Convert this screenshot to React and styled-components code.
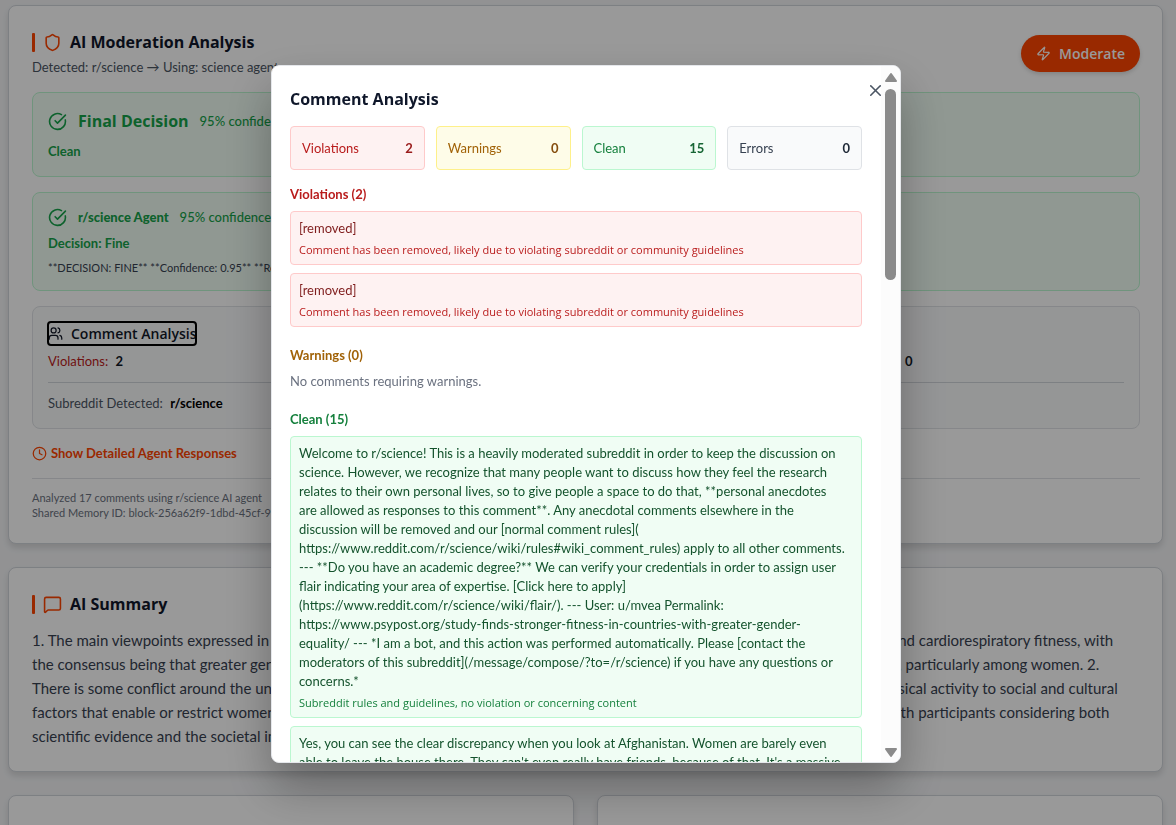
import { useState } from 'react';
import styled, { createGlobalStyle, ThemeProvider } from 'styled-components';
import {
  CircleCheckBig,
  Clock,
  MessageSquare,
  Shield,
  Users,
  X,
  Zap,
} from 'lucide-react';

const theme = {
  headingFont: '"Open Sans", "Noto Sans", sans-serif',
  bodyFont: 'Lato, "Open Sans", sans-serif',
  accent: '#ff4500',
  heading: '#0f172a',
  text: '#374151',
  muted: '#4b5563',
  subtle: '#6b7280',
  border: '#d1d5db',
  borderLight: '#dfe2e6',
  tones: {
    red: { bg: '#fef2f2', border: '#fecaca', label: '#b91c1c', value: '#991b1b', body: '#7f1d1d', note: '#b91c1c' },
    yellow: { bg: '#fefce8', border: '#fef08a', label: '#a16207', value: '#854d0e', body: '#713f12', note: '#a16207' },
    green: { bg: '#f0fdf4', border: '#bbf7d0', label: '#15803d', value: '#166534', body: '#14532d', note: '#15803d' },
    gray: { bg: '#f9fafb', border: '#dfe2e6', label: '#374151', value: '#1f2937', body: '#111827', note: '#374151' },
  },
};

const GlobalStyle = createGlobalStyle`
  * {
    box-sizing: border-box;
    margin: 0;
    padding: 0;
  }

  body {
    height: 100vh;
    overflow: hidden;
    background: #f3f4f6;
    color: #111827;
    font-family: ${theme.bodyFont};
    font-size: 13px;
    line-height: 19px;
  }

  button {
    border: none;
    background: none;
    font: inherit;
    color: inherit;
    cursor: pointer;
  }
`;

const Page = styled.main`
  display: flex;
  flex-direction: column;
  gap: 23px;
  height: 100vh;
  padding: 5px 13px 0 8px;
  overflow: hidden;

  > * {
    flex-shrink: 0;
  }
`;

const Card = styled.section`
  padding: 23px 22px 23px 23px;
  background: #fff;
  border: 1px solid ${props => props.theme.border};
  border-radius: 8px;
  box-shadow: 0 4px 6px rgba(0, 0, 0, 0.12);
`;

const CardRow = styled.div`
  display: grid;
  grid-template-columns: 1fr 1fr;
  gap: 23px;
`;

const EmptyCard = styled(Card)`
  min-height: 200px;
`;

const CardHeader = styled.header`
  display: flex;
  justify-content: space-between;
  align-items: center;
  margin-bottom: ${props => (props.$compact ? '11px' : '15px')};
`;

const CardTitle = styled.h2`
  display: flex;
  align-items: center;
  gap: 8px;
  color: ${props => props.theme.heading};
  font-family: ${props => props.theme.headingFont};
  font-size: 16px;
  font-weight: 700;
  line-height: 26px;

  &::before {
    content: '';
    width: 3px;
    height: 19px;
    border-radius: 1px;
    background: ${props => props.theme.accent};
  }

  svg {
    color: ${props => props.theme.accent};
  }
`;

const Subtitle = styled.p`
  margin-top: 3px;
  color: ${props => props.theme.muted};
`;

const ModerateButton = styled.button`
  display: flex;
  align-items: center;
  gap: 8px;
  height: 37px;
  padding: 0 15px;
  border-radius: 19px;
  background: ${props => props.theme.accent};
  color: #fff;
  font-family: ${props => props.theme.headingFont};
  font-size: 14px;
  font-weight: 600;
  box-shadow: 0 2px 4px rgba(0, 0, 0, 0.15);
`;

const Panel = styled.div`
  margin-bottom: 15px;
  padding: 15px;
  border: 1px solid ${props => props.theme.tones[props.$tone].border};
  border-radius: 8px;
  background: ${props => props.theme.tones[props.$tone].bg};
`;

const AgentRow = styled.div`
  display: flex;
  align-items: center;
  gap: 11px;
  color: #16a34a;
  line-height: ${props => (props.$large ? '26px' : '19px')};

  strong {
    font-family: ${props => (props.$large ? props.theme.headingFont : 'inherit')};
    font-size: ${props => (props.$large ? '16px' : '13px')};
    font-weight: ${props => (props.$large ? '700' : '900')};
  }

  span {
    font-weight: 500;
  }
`;

const Decision = styled.p`
  margin-top: ${props => (props.$spaced ? '8px' : '7px')};
  color: #16a34a;
  font-weight: 700;
`;

const Reasoning = styled.p`
  margin-top: 7px;
  color: ${props => props.theme.text};
  font-size: 11px;
  line-height: 15px;
`;

const AnalysisButton = styled.button`
  display: flex;
  align-items: center;
  gap: 8px;
  margin-bottom: 7px;
  border-radius: 3px;
  outline: 2px solid #000;
  outline-offset: -1px;
  font-family: ${props => props.theme.headingFont};
  font-size: 14px;
  font-weight: 600;
  line-height: 23px;
`;

const Counts = styled.div`
  display: grid;
  grid-template-columns: repeat(4, 1fr);
  gap: 7px;
`;

const Count = styled.p`
  color: ${props => props.theme.tones[props.$tone].label};

  strong {
    margin-left: 4px;
    color: #111827;
    font-weight: 700;
  }
`;

const Detected = styled.p`
  margin-top: 11px;
  padding-top: 11px;
  border-top: 1px solid ${props => props.theme.border};
  color: ${props => props.theme.muted};

  strong {
    margin-left: 4px;
    color: #000;
    font-weight: 700;
  }
`;

const DetailsButton = styled.button`
  display: flex;
  align-items: center;
  gap: 4px;
  color: ${props => props.theme.accent};
  font-weight: 700;
`;

const CardFooter = styled.footer`
  margin-top: 15px;
  padding-top: 11px;
  border-top: 1px solid ${props => props.theme.borderLight};
  color: ${props => props.theme.subtle};
  font-size: 11px;
  line-height: 15px;
`;

const Summary = styled.p`
  color: ${props => props.theme.text};
  font-size: 15px;
  line-height: 24px;
  white-space: pre-line;
`;

const Overlay = styled.div`
  position: fixed;
  inset: 0;
  display: flex;
  justify-content: center;
  padding: 65px 4px 62px 0;
  background: rgba(0, 0, 0, 0.4);
`;

const Dialog = styled.div`
  position: relative;
  display: flex;
  width: 100%;
  max-width: 630px;
  border: 1px solid #e5e7eb;
  border-radius: 8px;
  background: #fff;
  box-shadow: 0 24px 48px rgba(0, 0, 0, 0.3);
  overflow: hidden;
`;

const DialogBody = styled.div`
  flex: 1;
  min-width: 0;
  padding: 19px 19px 19px 18px;
  overflow: hidden;
`;

const DialogTitle = styled.h3`
  margin-bottom: 13px;
  color: ${props => props.theme.heading};
  font-family: ${props => props.theme.headingFont};
  font-size: 16px;
  font-weight: 700;
  line-height: 28px;
`;

const CloseButton = styled.button`
  position: absolute;
  top: 15px;
  right: 15px;
  display: flex;
  color: ${props => props.theme.muted};
`;

const Stats = styled.div`
  display: grid;
  grid-template-columns: repeat(4, 1fr);
  gap: 11px;
  margin-bottom: 15px;
`;

const Stat = styled.div`
  display: flex;
  justify-content: space-between;
  align-items: center;
  height: 44px;
  padding: 0 11px;
  border: 1px solid ${props => props.theme.tones[props.$tone].border};
  border-radius: 4px;
  background: ${props => props.theme.tones[props.$tone].bg};
  color: ${props => props.theme.tones[props.$tone].label};

  strong {
    color: ${props => props.theme.tones[props.$tone].value};
    font-weight: 700;
  }
`;

const Group = styled.section`
  margin-bottom: 19px;
`;

const GroupTitle = styled.h4`
  margin-bottom: 7px;
  color: ${props => props.theme.tones[props.$tone].label};
  font-size: 13px;
  font-weight: 700;
`;

const EmptyNote = styled.p`
  color: ${props => props.theme.subtle};
`;

const CommentList = styled.ul`
  display: flex;
  flex-direction: column;
  gap: 8px;
  list-style: none;
`;

const Comment = styled.li`
  padding: 7px 8px;
  border: 1px solid ${props => props.theme.tones[props.$tone].border};
  border-radius: 4px;
  background: ${props => props.theme.tones[props.$tone].bg};
  color: ${props => props.theme.tones[props.$tone].body};
  white-space: pre-line;

  small {
    display: block;
    margin-top: 4px;
    color: ${props => props.theme.tones[props.$tone].note};
    font-family: ${props => props.theme.headingFont};
    font-size: 11px;
    line-height: 15px;
  }
`;

const Scrollbar = styled.div`
  display: flex;
  flex-direction: column;
  align-items: center;
  gap: 7px;
  width: 19px;
  padding: 6px 0 4px;
  background: #fcfcfc;
`;

const ScrollTrack = styled.div`
  flex: 1;
  width: 11px;
`;

const ScrollThumb = styled.div`
  height: 191px;
  border-radius: 6px;
  background: #8b8b8b;
`;

const ScrollArrow = styled.svg`
  width: 12px;
  height: 10px;
  fill: #8b8b8b;
  stroke: #8b8b8b;
  stroke-width: 2;
  stroke-linejoin: round;
`;

const summary = [
  '1. The main viewpoints expressed in the discussion center on the strong link between gender equality, national social development and cardiorespiratory fitness, with',
  'the consensus being that greater gender equality is associated with significantly better fitness outcomes across the entire population, particularly among women. 2.',
  'There is some conflict around the underlying causes, with a number of commenters often attributing the observed differences in physical activity to social and cultural',
  'factors that enable or restrict women from exercising. 3. The overall tone of the discussion thread is rather thoughtful and serious, with participants considering both',
  'scientific evidence and the societal implications of the study.',
].join('\n');

const stats = [
  { label: 'Violations', value: 2, tone: 'red' },
  { label: 'Warnings', value: 0, tone: 'yellow' },
  { label: 'Clean', value: 15, tone: 'green' },
  { label: 'Errors', value: 0, tone: 'gray' },
];

const removedReason = 'Comment has been removed, likely due to violating subreddit or community guidelines';

const groups = [
  {
    title: 'Violations',
    count: 2,
    tone: 'red',
    comments: [
      { text: '[removed]', reason: removedReason },
      { text: '[removed]', reason: removedReason },
    ],
  },
  {
    title: 'Warnings',
    count: 0,
    tone: 'yellow',
    empty: 'No comments requiring warnings.',
    comments: [],
  },
  {
    title: 'Clean',
    count: 15,
    tone: 'green',
    comments: [
      {
        text: `Welcome to r/science! This is a heavily moderated subreddit in order to keep the discussion on
science. However, we recognize that many people want to discuss how they feel the research
relates to their own personal lives, so to give people a space to do that, **personal anecdotes
are allowed as responses to this comment**. Any anecdotal comments elsewhere in the
discussion will be removed and our [normal comment rules](
https://www.reddit.com/r/science/wiki/rules#wiki_comment_rules) apply to all other comments.
--- **Do you have an academic degree?** We can verify your credentials in order to assign user
flair indicating your area of expertise. [Click here to apply]
(https://www.reddit.com/r/science/wiki/flair/). --- User: u/mvea Permalink:
https://www.psypost.org/study-finds-stronger-fitness-in-countries-with-greater-gender-
equality/ --- *I am a bot, and this action was performed automatically. Please [contact the
moderators of this subreddit](/message/compose/?to=/r/science) if you have any questions or
concerns.*`,
        reason: 'Subreddit rules and guidelines, no violation or concerning content',
      },
      {
        text: `Yes, you can see the clear discrepancy when you look at Afghanistan. Women are barely even
able to leave the house there. They can't even really have friends, because of that. It's a massive`,
      },
    ],
  },
];

const ModerationCard = ({ onOpen }) => (
  <Card>
    <CardHeader>
      <div>
        <CardTitle>
          <Shield size={19} />
          AI Moderation Analysis
        </CardTitle>
        <Subtitle>Detected: r/science → Using: science agent</Subtitle>
      </div>
      <ModerateButton type="button">
        <Zap size={15} />
        Moderate
      </ModerateButton>
    </CardHeader>

    <Panel $tone="green">
      <AgentRow $large>
        <CircleCheckBig size={19} />
        <strong>Final Decision</strong>
        <span>95% confidence</span>
      </AgentRow>
      <Decision $spaced>Clean</Decision>
    </Panel>

    <Panel $tone="green">
      <AgentRow>
        <CircleCheckBig size={19} />
        <strong>r/science Agent</strong>
        <span>95% confidence</span>
      </AgentRow>
      <Decision>Decision: Fine</Decision>
      <Reasoning>**DECISION: FINE** **Confidence: 0.95** **Reasoning</Reasoning>
    </Panel>

    <Panel $tone="gray">
      <AnalysisButton type="button" onClick={onOpen}>
        <Users size={15} />
        Comment Analysis
      </AnalysisButton>
      <Counts>
        {stats.map(stat => (
          <Count key={stat.label} $tone={stat.tone}>
            {stat.label}: <strong>{stat.value}</strong>
          </Count>
        ))}
      </Counts>
      <Detected>
        Subreddit Detected: <strong>r/science</strong>
      </Detected>
    </Panel>

    <DetailsButton type="button">
      <Clock size={15} />
      Show Detailed Agent Responses
    </DetailsButton>

    <CardFooter>
      <p>Analyzed 17 comments using r/science AI agent</p>
      <p>Shared Memory ID: block-256a62f9-1dbd-45cf-9</p>
    </CardFooter>
  </Card>
);

const CommentDialog = ({ onClose }) => (
  <Overlay>
    <Dialog role="dialog" aria-modal="true" aria-labelledby="dialog-title">
      <DialogBody>
        <DialogTitle id="dialog-title">Comment Analysis</DialogTitle>
        <Stats>
          {stats.map(stat => (
            <Stat key={stat.label} $tone={stat.tone}>
              <span>{stat.label}</span>
              <strong>{stat.value}</strong>
            </Stat>
          ))}
        </Stats>
        {groups.map(group => (
          <Group key={group.title}>
            <GroupTitle $tone={group.tone}>
              {group.title} ({group.count})
            </GroupTitle>
            {group.comments.length === 0 && <EmptyNote>{group.empty}</EmptyNote>}
            {group.comments.length > 0 && (
              <CommentList>
                {group.comments.map((comment, index) => (
                  <Comment key={index} $tone={group.tone}>
                    {comment.text}
                    {comment.reason && <small>{comment.reason}</small>}
                  </Comment>
                ))}
              </CommentList>
            )}
          </Group>
        ))}
      </DialogBody>
      <Scrollbar aria-hidden="true">
        <ScrollArrow viewBox="0 0 12 10">
          <path d="M6 2 L11 9 H1 Z" />
        </ScrollArrow>
        <ScrollTrack>
          <ScrollThumb />
        </ScrollTrack>
        <ScrollArrow viewBox="0 0 12 10">
          <path d="M6 8 L11 1 H1 Z" />
        </ScrollArrow>
      </Scrollbar>
      <CloseButton type="button" aria-label="Close" onClick={onClose}>
        <X size={19} />
      </CloseButton>
    </Dialog>
  </Overlay>
);

const App = () => {
  const [open, setOpen] = useState(true);

  return (
    <ThemeProvider theme={theme}>
      <GlobalStyle />
      <Page>
        <ModerationCard onOpen={() => setOpen(true)} />
        <Card>
          <CardHeader $compact>
            <CardTitle>
              <MessageSquare size={19} />
              AI Summary
            </CardTitle>
          </CardHeader>
          <Summary>{summary}</Summary>
        </Card>
        <CardRow>
          <EmptyCard />
          <EmptyCard />
        </CardRow>
      </Page>
      {open && <CommentDialog onClose={() => setOpen(false)} />}
    </ThemeProvider>
  );
};

export default App;
